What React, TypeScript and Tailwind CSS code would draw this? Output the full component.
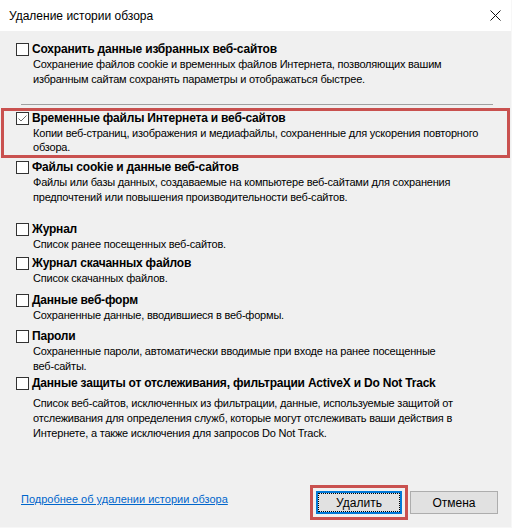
import React from 'react';

type Item = {
  label: string;
  lines: string[];
  checked?: boolean;
  mt: string;
  descMt?: string;
};

function CheckBox({ checked }: { checked?: boolean }) {
  return (
    <span className="w-[13px] h-[13px] shrink-0 border border-[#333333] bg-white flex items-center justify-center">
      {checked && (
        <svg width="11" height="11" viewBox="0 0 11 11">
          <path d="M1.5 5.5 L4 8 L9.5 2.5" fill="none" stroke="#6d6d6d" strokeWidth="1" />
        </svg>
      )}
    </span>
  );
}

function Label({ children }: { children: React.ReactNode }) {
  return (
    <span className="ml-[3px] font-bold text-[12px] leading-[13px] tracking-[-0.2px] text-black whitespace-nowrap">
      {children}
    </span>
  );
}

function Option({ item }: { item: Item }) {
  return (
    <div className={item.mt}>
      <div className="flex items-center h-[13px] pl-[16px]">
        <CheckBox checked={item.checked} />
        <Label>{item.label}</Label>
      </div>
      <div className={`${item.descMt ?? 'mt-[1px]'} pl-[33px] text-[11px] leading-[15px] tracking-[-0.2px] text-black`}>
        {item.lines.map((l) => (
          <div key={l} className="whitespace-nowrap">{l}</div>
        ))}
      </div>
    </div>
  );
}

function App() {
  const first: Item = {
    label: 'Сохранить данные избранных веб-сайтов',
    lines: [
      'Сохранение файлов cookie и временных файлов Интернета, позволяющих вашим',
      'избранным сайтам сохранять параметры и отображаться быстрее.',
    ],
    mt: 'mt-[12px]',
  };

  const rest: Item[] = [
    {
      label: 'Файлы cookie и данные веб-сайтов',
      lines: [
        'Файлы или базы данных, создаваемые на компьютере веб-сайтами для сохранения',
        'предпочтений или повышения производительности веб-сайтов.',
      ],
      mt: 'mt-[3px]',
    },
    { label: 'Журнал', lines: ['Список ранее посещенных веб-сайтов.'], mt: 'mt-[18px]' },
    { label: 'Журнал скачанных файлов', lines: ['Список скачанных файлов.'], mt: 'mt-[5px]' },
    { label: 'Данные веб-форм', lines: ['Сохраненные данные, вводившиеся в веб-формы.'], mt: 'mt-[8px]' },
    {
      label: 'Пароли',
      lines: [
        'Сохраненные пароли, автоматически вводимые при входе на ранее посещенные',
        'веб-сайты.',
      ],
      mt: 'mt-[7px]',
    },
    {
      label: 'Данные защиты от отслеживания, фильтрации ActiveX и Do Not Track',
      lines: [
        'Список веб-сайтов, исключенных из фильтрации, данные, используемые защитой от',
        'отслеживания для определения служб, которые могут отслеживать ваши действия в',
        'Интернете, а также исключения для запросов Do Not Track.',
      ],
      mt: 'mt-[3px]',
      descMt: 'mt-[6px]',
    },
  ];

  return (
    <div
      className="w-[512px] h-[528px] flex flex-col bg-[#f0f0f0] border-r border-b border-[#f7f7f7] overflow-hidden"
      style={{ fontFamily: '"Liberation Sans", Arial, sans-serif' }}
    >
      {/* Title bar */}
      <div className="h-[31px] shrink-0 bg-white flex items-center justify-between pl-[9px] pr-[10px]">
        <span className="text-[12px] text-black">Удаление истории обзора</span>
        <svg width="11" height="11" viewBox="0 0 11 11">
          <path d="M0.5 0.5 L10.5 10.5 M10.5 0.5 L0.5 10.5" stroke="#111111" strokeWidth="1" />
        </svg>
      </div>

      {/* Options */}
      <div className="flex-1 flex flex-col">
        <Option item={first} />
        <div className="mt-[17px] ml-[21px] mr-[18px] h-px bg-[#a0a0a0]" />
        <div className="mt-[3px] mx-[1px] border-[3px] border-[#c9514f] pt-[1px] pb-[1px]">
          <div className="-ml-[4px]">
            <div className="flex items-center h-[13px] pl-[16px]">
              <CheckBox checked />
              <Label>Временные файлы Интернета и веб-сайтов</Label>
            </div>
            <div className="mt-[1px] pl-[33px] text-[11px] leading-[14px] tracking-[-0.2px] text-black">
              <div className="whitespace-nowrap">
                Копии веб-страниц, изображения и медиафайлы, сохраненные для ускорения повторного
              </div>
              <div>обзора.</div>
            </div>
          </div>
        </div>
        {rest.map((it) => (
          <Option key={it.label} item={it} />
        ))}
      </div>

      {/* Footer */}
      <div className="shrink-0 flex items-center justify-between pl-[21px] pr-[13px] pb-[7px]">
        <a href="#" className="text-[11px] text-[#0066cc] underline -mt-[6px]">
          Подробнее об удалении истории обзора
        </a>
        <div className="flex items-center">
          <div className="border-[3px] border-[#c9514f] p-[3px]">
            <button className="w-[86px] h-[23px] bg-[#e1e1e1] border-2 border-[#0078d7] text-[12px] text-black flex items-center justify-center">
              <span className="w-full h-full border border-dotted border-black flex items-center justify-center">
                Удалить
              </span>
            </button>
          </div>
          <button className="ml-[2px] w-[88px] h-[23px] bg-[#e1e1e1] border border-[#adadad] text-[12px] text-black">
            Отмена
          </button>
        </div>
      </div>
    </div>
  );
}

export default App;
